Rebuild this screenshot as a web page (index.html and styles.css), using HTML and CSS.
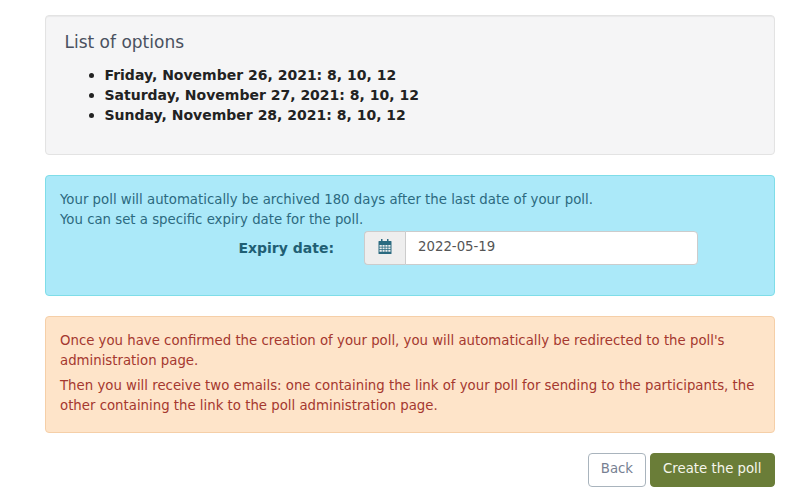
FILE: index.html
```html
<!DOCTYPE html>
<html lang="en">
<head>
    <meta charset="UTF-8">
    <title>Create the poll</title>
    <link rel="stylesheet" href="styles.css">
</head>
<body>
    <div class="container">
        <div class="well">
            <h3>List of options</h3>
            <ul>
                <li>Friday, November 26, 2021: 8, 10, 12</li>
                <li>Saturday, November 27, 2021: 8, 10, 12</li>
                <li>Sunday, November 28, 2021: 8, 10, 12</li>
            </ul>
        </div>

        <div class="alert alert-info">
            <p>Your poll will automatically be archived 180 days after the last date of your poll.<br>
            You can set a specific expiry date for the poll.</p>
            <div class="form-row">
                <label for="expiry">Expiry date:</label>
                <div class="input-group">
                    <span class="input-addon">
                        <svg width="14" height="15" viewBox="0 0 14 15">
                            <path fill="#2b6a80" fill-rule="evenodd" d="M3 0h1.500v2H9V0h1.500v2h2.500a.5.500 0 0 1 .5.500V14.500a.5.500 0 0 1-.5.500H1a.5.500 0 0 1-.5-.5V2.500A.5.500 0 0 1 1 2h2zM1.500 6v1.800h2.300V6zm3 0v1.800h2.100V6zm2.900 0v1.800h2.100V6zm2.900 0v1.800h2.200V6zM1.500 8.500v1.800h2.300V8.500zm3 0v1.800h2.100V8.500zm2.900 0v1.800h2.100V8.500zm2.900 0v1.800h2.200V8.500zM1.500 11v1.800h2.300V11zm3 0v1.800h2.100V11zm2.900 0v1.800h2.100V11zm2.900 0v1.800h2.200V11z"/>
                        </svg>
                    </span>
                    <input id="expiry" class="date-input" type="text" value="2022-05-19">
                </div>
            </div>
        </div>

        <div class="alert alert-warning">
            <p>Once you have confirmed the creation of your poll, you will automatically be redirected to the poll's administration page.</p>
            <p>Then you will receive two emails: one containing the link of your poll for sending to the participants, the other containing the link to the poll administration page.</p>
        </div>

        <div class="actions">
            <button class="btn btn-back">Back</button>
            <button class="btn btn-create">Create the poll</button>
        </div>
    </div>
</body>
</html>
```

FILE: styles.css
```css
* {
    box-sizing: border-box;
}

body {
    margin: 0;
    background-color: #fff;
    color: #333;
    font-family: "DejaVu Sans", sans-serif;
    font-size: 13.3px;
    line-height: 20px;
}

.container {
    width: 730px;
    margin-left: 45px;
    padding-top: 15px;
}

.well {
    height: 140px;
    margin-bottom: 20px;
    padding: 19px 19px 19px 18.5px;
    background-color: #f5f5f6;
    border: 1px solid #e3e3e3;
    border-radius: 4px;
    box-shadow: inset 0 1px 1px rgba(0, 0, 0, 0.05);
}

.well h3 {
    height: 20px;
    margin: 0 0 10px;
    color: #4a5160;
    font-size: 17px;
    font-weight: 400;
    line-height: 15px;
}

.well ul {
    margin: 0;
    padding-left: 40px;
    list-style: none;
    font-size: 14px;
    font-weight: bold;
    color: #222;
}

.well li {
    position: relative;
}

.well li::before {
    content: "";
    position: absolute;
    left: -16px;
    top: 8px;
    width: 5px;
    height: 5px;
    background-color: #222;
    border-radius: 50%;
}

.alert {
    margin-bottom: 20px;
    padding: 14px;
    border: 1px solid transparent;
    border-radius: 4px;
}

.alert p {
    margin: 0 0 5px;
}

.alert-info {
    height: 121px;
    background-color: #abe9f9;
    border-color: #7fdde8;
    color: #2b6a80;
}

.alert-info p {
    margin-bottom: 1px;
}

.alert-warning {
    height: 117px;
    background-color: #fee4c9;
    border-color: #f5cfa8;
    color: #a5382f;
}

.form-row {
    display: flex;
    align-items: flex-start;
}

.form-row label {
    width: 274px;
    padding-top: 7px;
    font-size: 14px;
    font-weight: bold;
    color: #1f5f74;
    text-align: right;
}

.input-group {
    display: flex;
    width: 334px;
    height: 34px;
    margin-left: 30px;
}

.input-addon {
    display: flex;
    justify-content: center;
    align-items: center;
    width: 41px;
    padding-bottom: 3px;
    background-color: #eee;
    border: 1px solid #ccc;
    border-right: 0;
    border-radius: 4px 0 0 4px;
}

.date-input {
    flex: 1;
    min-width: 0;
    padding: 0 12px 4px;
    background-color: #fff;
    border: 1px solid #ccc;
    border-radius: 0 4px 4px 0;
    color: #555;
    font-family: inherit;
    font-size: 13.3px;
}

.actions {
    display: flex;
    justify-content: flex-end;
    gap: 4px;
}

.btn {
    height: 34px;
    padding: 0 12px 3px;
    border: 1px solid transparent;
    border-radius: 4px;
    font-family: inherit;
    font-size: 13.3px;
}

.btn-back {
    padding-left: 11.5px;
    padding-right: 11.5px;
    background-color: #fff;
    border-color: #a9b4bd;
    color: #777f92;
}

.btn-create {
    padding-left: 12.5px;
    padding-right: 12.5px;
    background-color: #6a7d38;
    border-color: #6a7d38;
    color: #f6f6ec;
}
```
